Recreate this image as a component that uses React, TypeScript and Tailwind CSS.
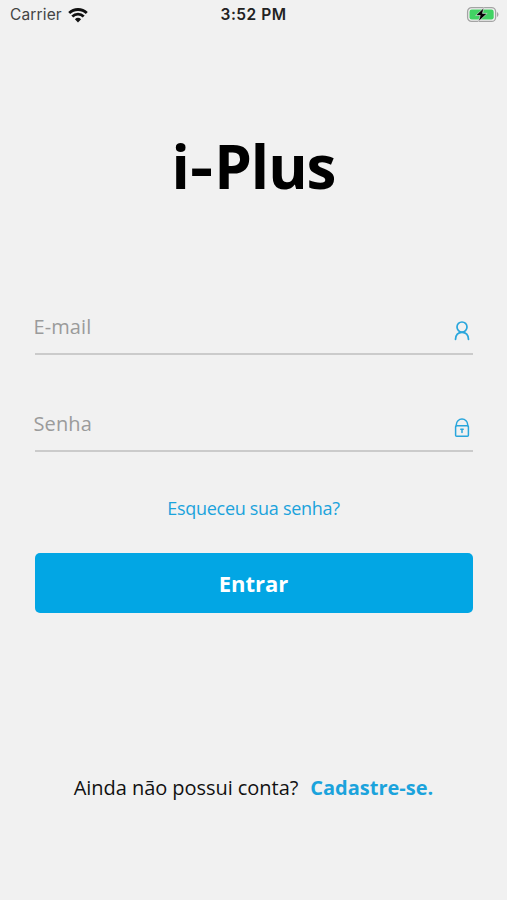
import type { ReactNode } from "react";

const UserIcon = () => (
  <svg width="16" height="20" viewBox="0 0 16 20" fill="none" stroke="#29a6dc" strokeWidth="1.7" strokeLinecap="round">
    <circle cx="8" cy="6" r="5" />
    <path d="M1.5 18.4C1.700 14 4.300 11.400 8 11.400s6.300 2.600 6.500 7" />
  </svg>
);

const LockIcon = () => (
  <svg width="16" height="20" viewBox="0 0 16 20" fill="none" stroke="#29a6dc" strokeWidth="1.5" strokeLinecap="round">
    <rect x="1.600" y="7.800" width="12.800" height="10.400" rx="1" />
    <path d="M2.300 7.800V6.800a5.700 5.700 0 0 1 11.400 0v1" />
    <path d="M6.800 11.200h2.400M8 11.200v3.200" />
  </svg>
);

const WifiIcon = () => (
  <svg width="20" height="15" viewBox="0 0 20 15" fill="none" stroke="#111" strokeWidth="2.800">
    <path d="M1.200 5.100a12.600 12.600 0 0 1 17.600 0" />
    <path d="M4.300 8.500a8.200 8.200 0 0 1 11.400 0" />
    <path d="M10 14.500l-3.100-3.300a4.500 4.500 0 0 1 6.200 0z" fill="#111" stroke="none" />
  </svg>
);

const BatteryIcon = () => (
  <svg width="34" height="18" viewBox="0 0 34 18">
    <rect x="1.600" y="1.600" width="28" height="13.800" rx="4" fill="#f1f1f1" stroke="#a4a4a4" strokeWidth="1.300" />
    <rect x="3.500" y="3.500" width="24.200" height="10" rx="2.200" fill="#41d363" />
    <path d="M31 6v5c1.900-.8 1.900-4.200 0-5z" fill="#a4a4a4" />
    <path d="M17.900 1.700L9.700 9.500h4.500l-1.800 6.100L21.200 7.400h-4.700z" fill="#050505" stroke="#f1f1f1" strokeWidth=".6" />
  </svg>
);

const Field = ({ label, type, icon }: { label: string; type: string; icon: ReactNode }) => (
  <label className="flex h-[62px] items-start border-b-2 border-[#cbcbcb] pt-[17px]">
    <input
      type={type}
      placeholder={label}
      className="-ml-px h-8 min-w-0 flex-1 bg-transparent text-[20px] tracking-[0.100px] text-black outline-none placeholder:text-[#9b9b9b]"
    />
    <span className="mt-[11px] mr-[3px]">{icon}</span>
  </label>
);

const StatusBar = () => (
  <header className="grid h-[30px] grid-cols-3 items-center font-['Inter',sans-serif] text-[15px] text-[#222]">
    <div className="flex items-center gap-[6px] pl-[10px] text-[#444]">
      <span className="text-[15.500px] tracking-[0.150px]">Carrier</span>
      <WifiIcon />
    </div>
    <div className="text-center text-[15.500px] font-semibold tracking-[0.500px]">3:52 PM</div>
    <div className="flex justify-end pr-[7px]">
      <BatteryIcon />
    </div>
  </header>
);

export default function App() {
  return (
    <div className="flex h-[900px] w-[507px] flex-col overflow-hidden bg-[#f1f1f1] font-['Open_Sans',sans-serif]">
      <StatusBar />

      <main className="flex flex-1 flex-col px-[34.500px]">
        <h1 className="mt-[96px] flex justify-center text-[60px] leading-[80px] font-bold text-black">
          <span>i</span>
          <span className="mr-[5px] origin-left scale-x-[1.2]">-</span>
          <span className="tracking-[-1px]">Plus</span>
        </h1>

        <form className="mt-[87px] flex flex-col">
          <Field label="E-mail" type="email" icon={<UserIcon />} />
          <div className="h-[35px]" />
          <Field label="Senha" type="password" icon={<LockIcon />} />

          <a href="#" className="mt-[44px] self-center text-[18px] leading-6 font-medium tracking-[-0.300px] text-[#1ba3dc]">
            Esqueceu sua senha?
          </a>

          <button type="button" className="mt-[33px] h-[60px] rounded-[5px] bg-[#02a6e4] text-[22px] font-bold text-white">
            Entrar
          </button>
        </form>

        {/* Sign up */}
        <p className="mt-[161px] flex justify-center gap-3 text-[20px] leading-[28px] whitespace-nowrap text-[#111]">
          <span className="tracking-[-0.050px]">Ainda não possui conta?</span>
          <a href="#" className="font-bold text-[#1ba3dc]">
            Cadastre-se.
          </a>
        </p>
      </main>
    </div>
  );
}
